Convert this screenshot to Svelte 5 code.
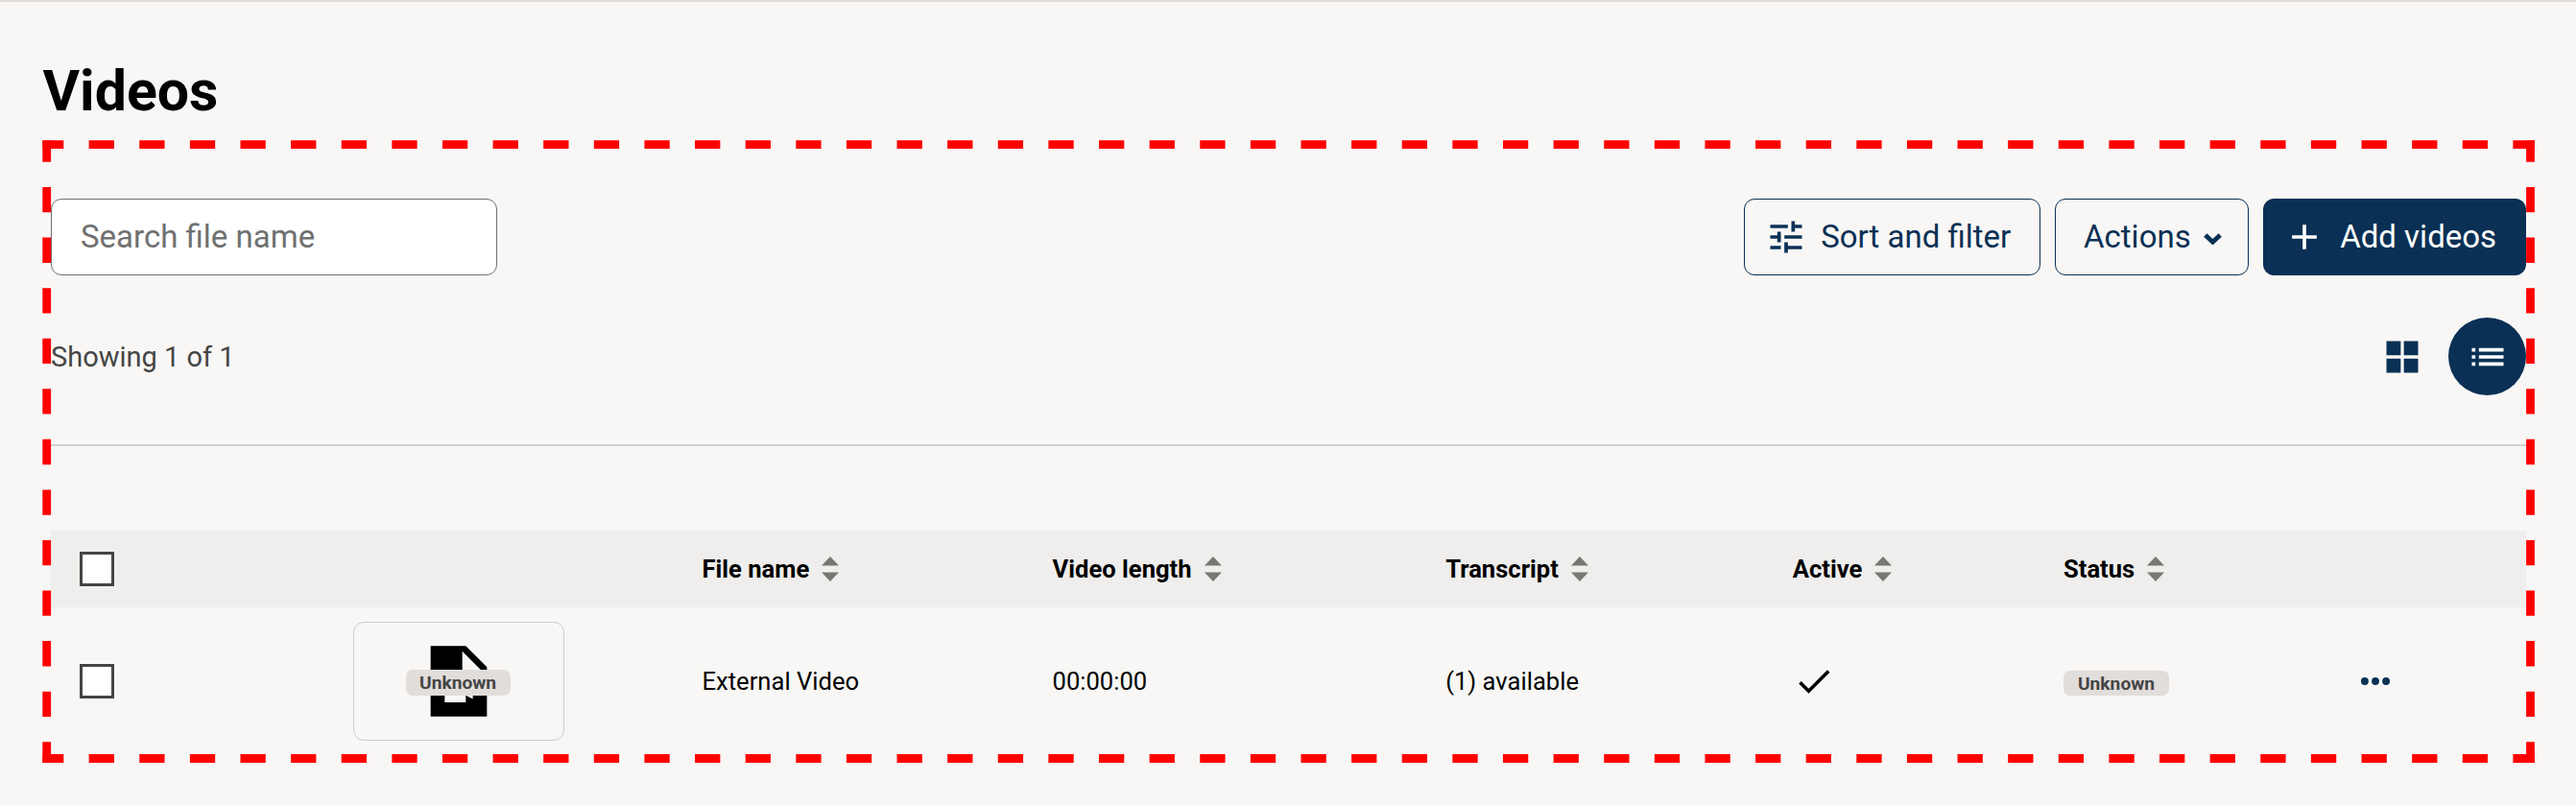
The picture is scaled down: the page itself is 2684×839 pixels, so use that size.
<script>
  const columns = ['File name', 'Video length', 'Transcript', 'Active', 'Status'];
  const edges = [
    { x1: 44.4, y1: 150.7, x2: 2641, y2: 150.7, offset: 4.4, period: 52.62 },
    { x1: 44.4, y1: 790.5, x2: 2641, y2: 790.5, offset: 4.4, period: 52.62 },
    { x1: 48.7, y1: 146.4, x2: 48.7, y2: 795, offset: 3.9, period: 52.56 },
    { x1: 2636.5, y1: 146.4, x2: 2636.5, y2: 795, offset: 3.9, period: 52.56 },
  ];
</script>

<main>
  <h1>Videos</h1>

  <section class="frame">
    <div class="toolbar">
      <input class="search" type="text" placeholder="Search file name" />
      <div class="buttons">
        <button class="btn sort">
          <svg class="icon" viewBox="0 0 24 24"><path d="M3 17v2h6v-2H3zM3 5v2h10V5H3zm10 16v-2h8v-2h-8v-2h-2v6h2zM7 9v2H3v2h4v2h2V9H7zm14 4v-2H11v2h10zm-6-4h2V7h4V5h-4V3h-2v6z" /></svg>
          <span>Sort and filter</span>
        </button>
        <button class="btn actions">
          <span>Actions</span>
          <svg class="caret" viewBox="0 0 19 12"><path d="M1.8 1.9 9.5 9.2l7.7-7.3" /></svg>
        </button>
        <button class="btn add">
          <svg class="icon" viewBox="0 0 24 24"><path d="M19 13h-6v6h-2v-6H5v-2h6V5h2v6h6v2z" /></svg>
          <span>Add videos</span>
        </button>
      </div>
    </div>

    <div class="summary">
      <span class="count">Showing 1 of 1</span>
      <div class="views">
        <button class="view" aria-label="Card view">
          <svg class="icon" viewBox="0 0 24 24"><path d="M3 3h8.1v8.1H3zM12.9 3H21v8.1h-8.1zM3 12.9h8.1V21H3zM12.9 12.9H21V21h-8.1z" /></svg>
        </button>
        <button class="view active" aria-label="List view">
          <svg class="icon" viewBox="0 0 24 24"><path d="M3 13h2v-2H3v2zm0 4h2v-2H3v2zm0-8h2V7H3v2zm4 4h14v-2H7v2zm0 4h14v-2H7v2zM7 7v2h14V7H7z" /></svg>
        </button>
      </div>
    </div>

    <hr />

    <div class="table">
      <div class="row head">
        <input class="check" type="checkbox" aria-label="Select all" />
        <span></span>
        {#each columns as label}
          <span class="th">
            {label}
            <svg class="sorter" viewBox="0 0 18 26"><path d="M9 0l9 9.6H0zM9 26l9-9.6H0z" /></svg>
          </span>
        {/each}
        <span></span>
      </div>
      <div class="row body">
        <input class="check" type="checkbox" aria-label="Select row" />
        <div class="thumb">
          <svg viewBox="0 0 24 24"><path d="M14 2H4v20h16V8l-6-6zm-1 7V3.5L18.5 9H13zm1 5 2-1.06v4.12L14 16v2H8v-6h6v2z" /></svg>
          <span class="badge over">Unknown</span>
        </div>
        <span>External Video</span>
        <span>00:00:00</span>
        <span>(1) available</span>
        <svg class="icon tick" viewBox="0 0 24 24"><path d="M9 16.2 4.8 12l-1.4 1.4L9 19 21 7l-1.4-1.4L9 16.2z" /></svg>
        <span class="badge">Unknown</span>
        <svg class="icon more" viewBox="0 0 24 24"><circle cx="5.95" cy="12" r="2.15" /><circle cx="12" cy="12" r="2.15" /><circle cx="18.05" cy="12" r="2.15" /></svg>
      </div>
    </div>
  </section>

  <svg class="outline" width="2684" height="839">
    {#each edges as e}
      <line x1={e.x1} y1={e.y1} x2={e.x2} y2={e.y2} stroke-dashoffset={e.offset} stroke-dasharray="26.3 {e.period - 26.3}" />
    {/each}
  </svg>
</main>

<style>
  :global(body) {
    margin: 0;
    background: #f8f7f5;
  }
  main {
    position: relative;
    box-sizing: border-box;
    width: 2684px;
    height: 839px;
    border-top: 2px solid #e1dfdd;
    background: #f8f7f5;
    color: #000;
    font-family: Roboto, sans-serif;
    font-size: 25.6px;
    overflow: hidden;
  }
  h1 {
    margin: 0;
    padding: 57px 0 0 44.5px;
    height: 96px;
    box-sizing: border-box;
    font-size: 59px;
    line-height: 72px;
    font-weight: 700;
  }
  .frame {
    margin: 57px 52px 0 53px;
    height: 631px;
  }
  .toolbar {
    display: flex;
    justify-content: space-between;
    padding-top: 52px;
  }
  .search {
    box-sizing: border-box;
    width: 464.5px;
    height: 80px;
    padding: 0 30px 2px;
    border: 1px solid #707070;
    border-radius: 11px;
    background: #fff;
    font: 400 33px Roboto, sans-serif;
  }
  .search::placeholder {
    color: #707070;
    opacity: 1;
  }
  .buttons {
    display: flex;
    gap: 14.7px;
  }
  .btn {
    box-sizing: border-box;
    display: flex;
    align-items: center;
    height: 80px;
    border: 1px solid #0a3055;
    border-radius: 11px;
    background: none;
    color: #0a3055;
    font: 400 33px Roboto, sans-serif;
    white-space: nowrap;
  }
  .btn span {
    padding-bottom: 2px;
  }
  .sort {
    width: 309px;
    padding: 0 0 0 21px;
    gap: 14.3px;
  }
  .actions {
    width: 202.3px;
    padding: 0 0 0 29.5px;
    gap: 13.4px;
  }
  .add {
    width: 274.5px;
    padding: 0 0 0 20.3px;
    gap: 15.4px;
    background: #0a3055;
    color: #fff;
  }
  .icon {
    width: 44px;
    height: 44px;
    flex: none;
    fill: currentColor;
  }
  .caret {
    width: 19px;
    height: 12px;
    margin-top: 3px;
    fill: none;
    stroke: currentColor;
    stroke-width: 4.8;
  }
  .summary {
    display: flex;
    justify-content: space-between;
    align-items: center;
    height: 81px;
    margin-top: 44px;
  }
  .count {
    color: #454545;
    font-size: 29px;
  }
  .views {
    display: flex;
    gap: 7.5px;
  }
  .view {
    display: grid;
    place-items: center;
    width: 81px;
    height: 81px;
    padding: 0;
    border: 0;
    border-radius: 50%;
    background: none;
    color: #0a3055;
  }
  .view.active {
    background: #0a3055;
    color: #fff;
  }
  hr {
    height: 2px;
    margin: 51px 0 88px;
    border: 0;
    background: #d2d1cf;
  }
  .row {
    display: grid;
    grid-template-columns: 285px 363.5px 365px 409.7px 361.6px 282.2px 303px 1fr;
    align-items: center;
    padding-left: 30px;
  }
  .head {
    height: 80px;
    background: #efeeec;
    font-weight: 700;
  }
  .body {
    height: 153px;
  }
  .th {
    display: flex;
    align-items: center;
    gap: 13px;
  }
  .sorter {
    width: 18px;
    height: 26px;
    fill: #787774;
  }
  .check {
    appearance: none;
    box-sizing: border-box;
    width: 36px;
    height: 36px;
    margin: 0;
    border: 3px solid #454545;
    background: #fff;
  }
  .thumb {
    position: relative;
    box-sizing: border-box;
    display: grid;
    place-items: center;
    width: 220px;
    height: 124px;
    border: 1px solid #cccbc9;
    border-radius: 11px;
  }
  .thumb svg {
    width: 88px;
    height: 88px;
  }
  .badge {
    box-sizing: border-box;
    width: 110px;
    height: 26px;
    margin-top: 4px;
    padding-left: 15px;
    border-radius: 7px;
    background: #e1dddb;
    color: #454545;
    font-size: 19.2px;
    line-height: 27px;
    font-weight: 700;
  }
  .over {
    position: absolute;
    left: 54px;
    top: 49px;
    width: 109px;
    height: 27px;
    margin: 0;
    padding-left: 14px;
  }
  .more {
    color: #0a3055;
  }
  .outline {
    position: absolute;
    left: 0;
    top: -2px;
    pointer-events: none;
  }
  .outline line {
    stroke: #f00;
    stroke-width: 8.8;
  }
</style>
